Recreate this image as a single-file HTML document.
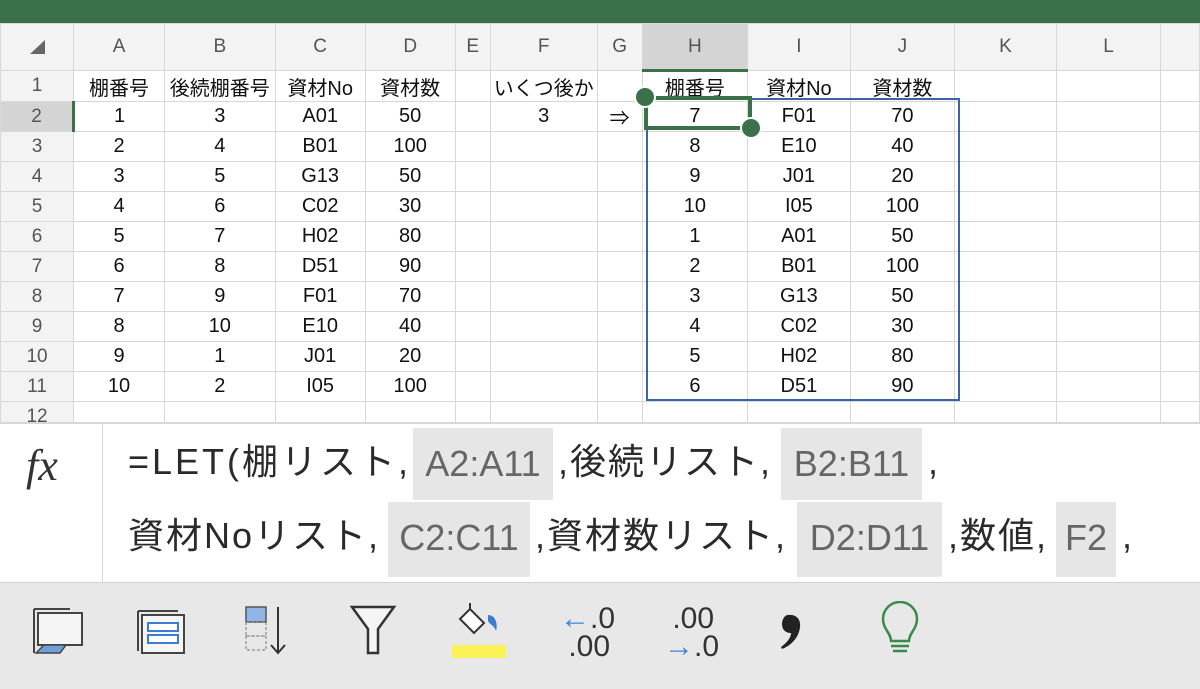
<!DOCTYPE html>
<html><head><meta charset="utf-8"><style>
*{margin:0;padding:0;box-sizing:border-box}
body{width:1200px;height:689px;overflow:hidden;background:#fff;position:relative;font-family:"Liberation Sans","Noto Sans CJK JP",sans-serif;color:#111}
.top{position:absolute;left:0;top:0;width:1200px;height:23px;background:#3a7148}
table{position:absolute;left:0;top:23px;border-collapse:collapse;table-layout:fixed}
td{border:1px solid #d8d8d8;height:30px;text-align:center;font-size:20px;white-space:nowrap;overflow:hidden;padding:0}
tr.h td{height:47px;background:#f3f3f3;color:#555;font-size:19px}
td.r{background:#f3f3f3;color:#555;font-size:19px}
.fb{position:absolute;left:0;top:422px;width:1200px;height:160px;background:#fff;border-top:2px solid #d8d8d8}
.fx{position:absolute;left:102px;top:0;width:1px;height:160px;background:#d8d8d8}
.ft{position:absolute;font-size:36px;color:#2a2a2a;white-space:nowrap;line-height:72px;letter-spacing:2px}
.bx{position:absolute;background:#e6e6e6;color:#666;font-size:36px;line-height:72px;text-align:center}
.tb{position:absolute;left:0;top:582px;width:1200px;height:107px;background:#e8e8e8;border-top:1px solid #d0d0d0}
</style></head><body>
<div class="top"></div>
<table>
<colgroup><col style="width:75px"><col style="width:92px"><col style="width:111px"><col style="width:91px"><col style="width:91px"><col style="width:36px"><col style="width:107px"><col style="width:46px"><col style="width:107px"><col style="width:104px"><col style="width:106px"><col style="width:105px"><col style="width:108px"><col style="width:40px"></colgroup>
<tr class="h"><td><svg width="20" height="18" viewBox="0 0 20 18" style="margin-top:6px"><path d="M18 2 L18 16 L3 16 Z" fill="#666"/></svg></td><td>A</td><td>B</td><td>C</td><td>D</td><td>E</td><td>F</td><td>G</td><td style="background:#d4d4d4;border-bottom:3px solid #3a7148">H</td><td>I</td><td>J</td><td>K</td><td>L</td><td></td></tr>
<tr><td class="r">1</td><td>棚番号</td><td>後続棚番号</td><td>資材No</td><td>資材数</td><td></td><td>いくつ後か</td><td></td><td>棚番号</td><td>資材No</td><td>資材数</td><td></td><td></td><td></td></tr>
<tr><td class="r" style="background:#d4d4d4;border-right:3px solid #3a7148">2</td><td>1</td><td>3</td><td>A01</td><td>50</td><td></td><td>3</td><td>⇒</td><td>7</td><td>F01</td><td>70</td><td></td><td></td><td></td></tr>
<tr><td class="r">3</td><td>2</td><td>4</td><td>B01</td><td>100</td><td></td><td></td><td></td><td>8</td><td>E10</td><td>40</td><td></td><td></td><td></td></tr>
<tr><td class="r">4</td><td>3</td><td>5</td><td>G13</td><td>50</td><td></td><td></td><td></td><td>9</td><td>J01</td><td>20</td><td></td><td></td><td></td></tr>
<tr><td class="r">5</td><td>4</td><td>6</td><td>C02</td><td>30</td><td></td><td></td><td></td><td>10</td><td>I05</td><td>100</td><td></td><td></td><td></td></tr>
<tr><td class="r">6</td><td>5</td><td>7</td><td>H02</td><td>80</td><td></td><td></td><td></td><td>1</td><td>A01</td><td>50</td><td></td><td></td><td></td></tr>
<tr><td class="r">7</td><td>6</td><td>8</td><td>D51</td><td>90</td><td></td><td></td><td></td><td>2</td><td>B01</td><td>100</td><td></td><td></td><td></td></tr>
<tr><td class="r">8</td><td>7</td><td>9</td><td>F01</td><td>70</td><td></td><td></td><td></td><td>3</td><td>G13</td><td>50</td><td></td><td></td><td></td></tr>
<tr><td class="r">9</td><td>8</td><td>10</td><td>E10</td><td>40</td><td></td><td></td><td></td><td>4</td><td>C02</td><td>30</td><td></td><td></td><td></td></tr>
<tr><td class="r">10</td><td>9</td><td>1</td><td>J01</td><td>20</td><td></td><td></td><td></td><td>5</td><td>H02</td><td>80</td><td></td><td></td><td></td></tr>
<tr><td class="r">11</td><td>10</td><td>2</td><td>I05</td><td>100</td><td></td><td></td><td></td><td>6</td><td>D51</td><td>90</td><td></td><td></td><td></td></tr>
<tr><td class="r">12</td><td></td><td></td><td></td><td></td><td></td><td></td><td></td><td></td><td></td><td></td><td></td><td></td><td></td></tr>
</table>
<div style="position:absolute;left:646px;top:98px;width:314px;height:303px;border:2px solid #3b63a8"></div>
<div style="position:absolute;left:644px;top:96px;width:108px;height:34px;border:4px solid #3a7148"></div>
<div style="position:absolute;left:634px;top:86px;width:22px;height:22px;border-radius:50%;background:#3a7148;border:2px solid #fff"></div>
<div style="position:absolute;left:740px;top:117px;width:22px;height:22px;border-radius:50%;background:#3a7148;border:2px solid #fff"></div>
<div class="fb">
<div style="position:absolute;left:26px;top:16px;font-family:'Liberation Serif',serif;font-style:italic;font-size:44px;color:#333">fx</div>
<div class="fx"></div>
<div class="ft" style="left:128px;top:2px;letter-spacing:3px">=LET(棚リスト,</div>
<div class="bx" style="left:413px;top:4px;width:140px;height:72px">A2:A11</div>
<div class="ft" style="left:558px;top:2px">,後続リスト,</div>
<div class="bx" style="left:781px;top:4px;width:141px;height:72px">B2:B11</div>
<div class="ft" style="left:928px;top:2px">,</div>
<div class="ft" style="left:128px;top:76px">資材Noリスト,</div>
<div class="bx" style="left:388px;top:78px;width:142px;height:75px">C2:C11</div>
<div class="ft" style="left:535px;top:76px">,資材数リスト,</div>
<div class="bx" style="left:797px;top:78px;width:145px;height:75px">D2:D11</div>
<div class="ft" style="left:948px;top:76px">,数値,</div>
<div class="bx" style="left:1056px;top:78px;width:60px;height:75px">F2</div>
<div class="ft" style="left:1122px;top:76px">,</div>
</div>
<div class="tb">
<svg style="position:absolute;left:30px;top:18px" width="60" height="60" viewBox="0 0 60 60"><path d="M4 8H40M4 8V52" stroke="#444" stroke-width="2" fill="none"/><rect x="8" y="12" width="44" height="32" fill="#f5f5f5" stroke="#444" stroke-width="2"/><path d="M14 44H36L30 52H6Z" fill="#6fa0dc" stroke="#444" stroke-width="1.5"/></svg>
<svg style="position:absolute;left:130px;top:18px" width="60" height="60" viewBox="0 0 60 60"><path d="M8 10H48M8 10V50" stroke="#444" stroke-width="2" fill="none"/><rect x="12" y="14" width="42" height="38" fill="#f5f5f5" stroke="#444" stroke-width="2"/><rect x="18" y="22" width="30" height="8" fill="#fff" stroke="#3b7ed0" stroke-width="2"/><rect x="18" y="34" width="30" height="8" fill="#fff" stroke="#3b7ed0" stroke-width="2"/></svg>
<svg style="position:absolute;left:238px;top:18px" width="60" height="60" viewBox="0 0 60 60"><rect x="8" y="6" width="20" height="15" fill="#8fb6e6" stroke="#555" stroke-width="1.5"/><rect x="8" y="21" width="20" height="14" fill="none" stroke="#777" stroke-dasharray="3 2"/><rect x="8" y="35" width="20" height="14" fill="none" stroke="#777" stroke-dasharray="3 2"/><path d="M40 6V52M33 44L40 52L47 44" stroke="#333" stroke-width="2" fill="none"/></svg>
<svg style="position:absolute;left:344px;top:18px" width="60" height="60" viewBox="0 0 60 60"><path d="M8 6H50L34 28V52H24V28Z" fill="#f5f5f5" stroke="#333" stroke-width="2.5"/></svg>
<svg style="position:absolute;left:450px;top:18px" width="60" height="60" viewBox="0 0 60 60"><path d="M10 18L20 8L34 22L24 32Z" fill="#fff" stroke="#333" stroke-width="2"/><path d="M20 8V2" stroke="#333" stroke-width="2"/><path d="M38 14C46 14 48 24 46 30C44 24 40 24 38 20Z" fill="#3b7ed0"/><rect x="2" y="44" width="54" height="13" fill="#fbf25a"/></svg>
<div style="position:absolute;left:560px;top:22px;font-size:30px;line-height:28px;color:#333"><span style="color:#3b86d6">←</span>.0<br>&nbsp;.00</div>
<div style="position:absolute;left:664px;top:22px;font-size:30px;line-height:28px;color:#333">&nbsp;.00<br><span style="color:#3b86d6">→</span>.0</div>
<svg style="position:absolute;left:776px;top:30px" width="30" height="40" viewBox="0 0 30 40"><path d="M12 2C20 1 25 6 24 14C23 24 16 32 6 36L5 34C12 29 15 24 15 20C10 20 6 17 6 11C6 6 9 2 12 2Z" fill="#222"/></svg>
<svg style="position:absolute;left:875px;top:18px" width="50" height="60" viewBox="0 0 50 60"><path d="M16 40C16 32 8 28 8 18A17 17 0 0 1 42 18C42 28 34 32 34 40Z" fill="none" stroke="#3a8a4c" stroke-width="2.5"/><path d="M16 45H34M18 50H32" stroke="#3a8a4c" stroke-width="2.5"/></svg>
</div>
</body></html>
